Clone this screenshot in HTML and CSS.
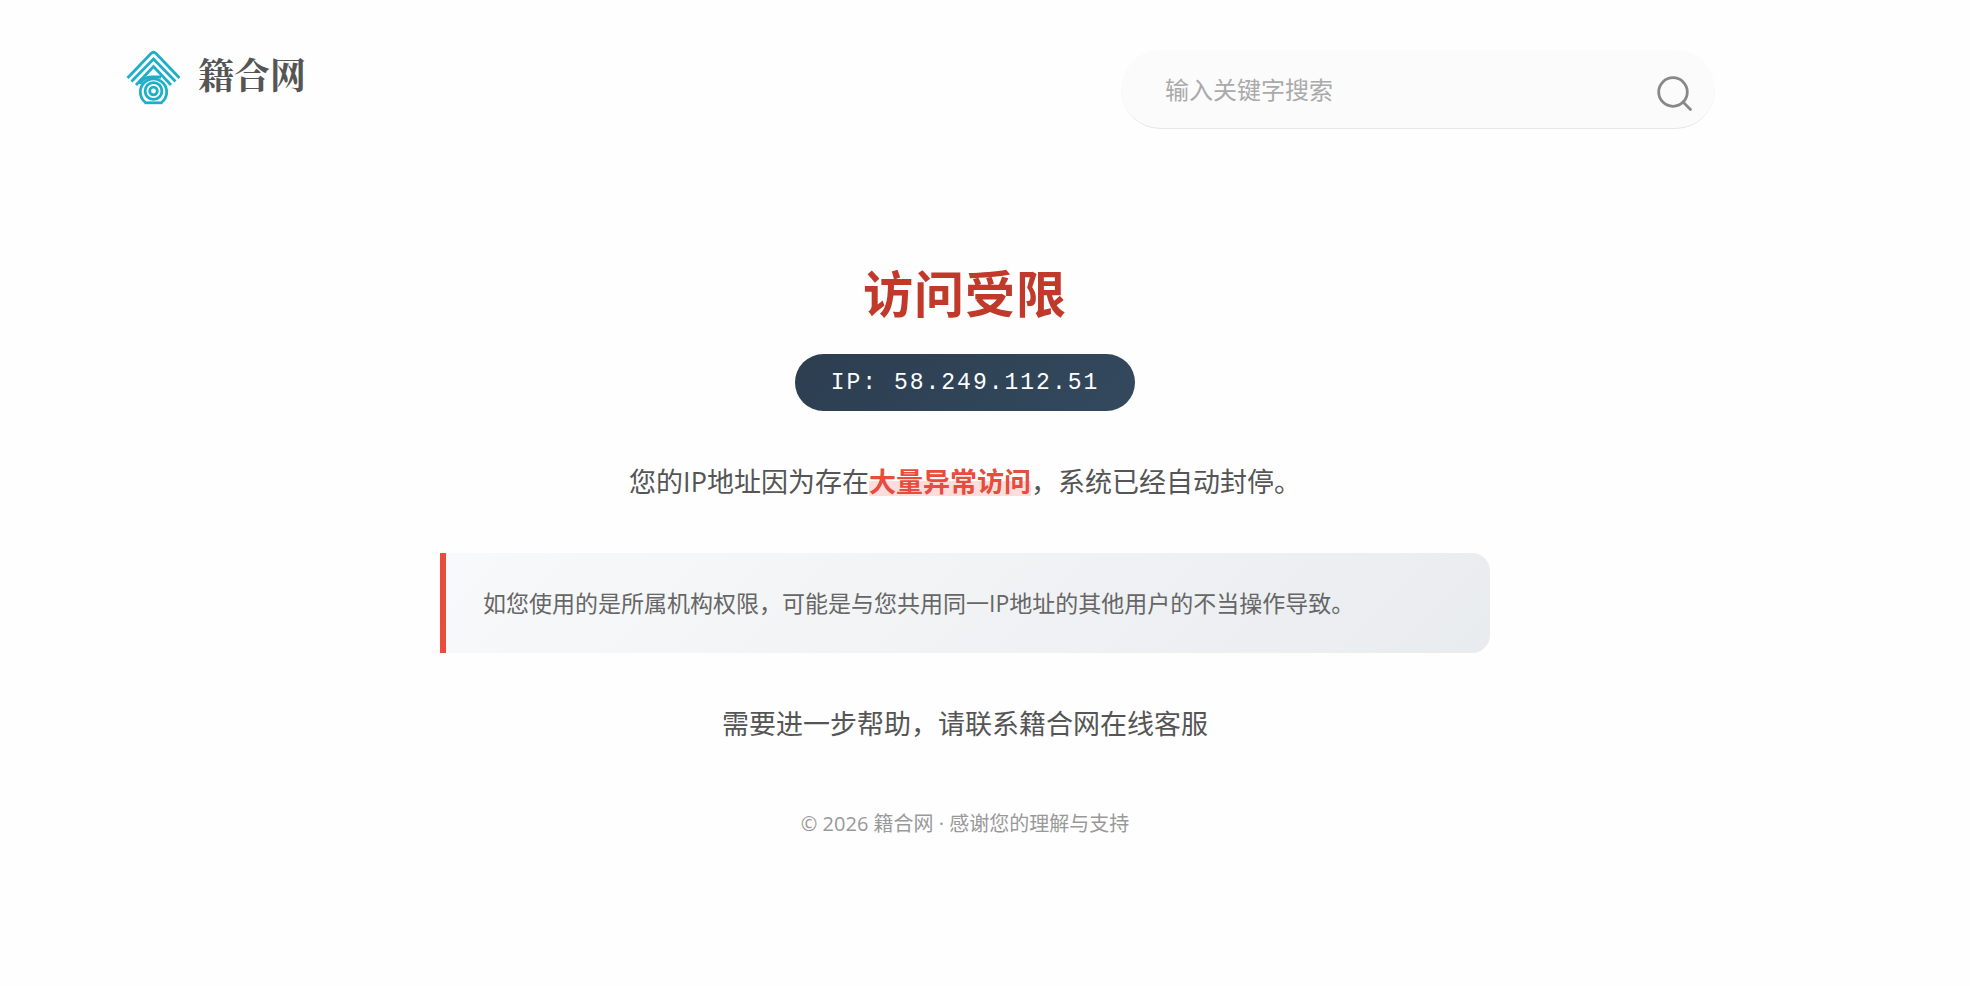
FILE: index.html
```
<!DOCTYPE html>
<html lang="zh-CN">
<head>
    <meta charset="UTF-8">
    <meta name="viewport" content="width=device-width, initial-scale=1.0">
    <title>访问受限 - 籍合网</title>
    <link rel="stylesheet" href="styles.css">
</head>
<body>
    <header class="header">
        <a class="logo" href="#">
            <svg class="logo-icon" viewBox="0 0 56 56" fill="none" stroke="#1eafc8" stroke-width="2.8" aria-hidden="true">
                <path d="M2.5 28 26 3.5Q28.5 1 31 3.5L54.5 28"/>
                <path d="M6.5 31.5 28.5 9 50.5 31.5"/>
                <path d="M11 35 28.5 16.5 46 35"/>
                <path d="M15 34Q18 27 27 27H36"/>
                <path d="M20.5 52.5A13.2 13.2 0 1 1 36.5 52.5"/>
                <path d="M19.5 52.8H37.5"/>
                <circle cx="28.5" cy="41" r="8.4"/>
                <circle cx="28.5" cy="41" r="3.8"/>
            </svg>
            <span class="logo-text">籍合网</span>
        </a>
        <form class="search" id="searchForm">
            <input type="text" class="search-input" placeholder="输入关键字搜索" aria-label="输入关键字搜索">
            <button type="submit" class="search-button" aria-label="搜索">
                <svg class="search-icon" viewBox="0 0 36 36" fill="none" stroke="#888" stroke-width="2.8" stroke-linecap="round" aria-hidden="true">
                    <circle cx="16" cy="16" r="14.3"/>
                    <path d="M26 26 33.5 33.5"/>
                </svg>
            </button>
        </form>
    </header>

    <main class="container">
        <h1>访问受限</h1>
        <div class="ip-address">IP: 58.249.112.51</div>
        <p class="message">您的IP地址因为存在<strong class="highlight">大量异常访问</strong>，系统已经自动封停。</p>
        <div class="notice">如您使用的是所属机构权限，可能是与您共用同一IP地址的其他用户的不当操作导致。</div>
        <p class="message">需要进一步帮助，请联系籍合网在线客服</p>
        <footer class="footer">© 2026 籍合网 · 感谢您的理解与支持</footer>
    </main>
</body>
</html>
```
FILE: styles.css
```
* {
    box-sizing: border-box;
}
body {
    font-family: "Open Sans", "Noto Sans CJK SC", sans-serif;
    background-color: #fefefe;
    color: #555;
    margin: 0;
    padding: 50px 40px 50px 0;
}
.header {
    display: flex;
    justify-content: space-between;
    align-items: flex-start;
    padding: 0 215px 0 125px;
}
.logo {
    display: flex;
    align-items: flex-start;
    gap: 17px;
    color: #555;
    text-decoration: none;
}
.logo-icon {
    width: 56px;
    height: 56px;
}
.logo-text {
    font-family: "Noto Serif CJK SC", "Noto Sans CJK SC", serif;
    font-size: 36px;
    font-weight: bold;
    line-height: 48px;
}
.search {
    display: flex;
    align-items: center;
    width: 594px;
    height: 79px;
    padding: 0 22px 0 44px;
    background: #fbfbfb;
    border-bottom: 1px solid #e6e6e6;
    border-radius: 40px;
}
.search-input {
    flex: 1;
    min-width: 0;
    padding: 0;
    border: none;
    outline: none;
    background: transparent;
    font-family: inherit;
    font-size: 24px;
    color: #555;
}
.search-input::placeholder {
    color: #aaa;
}
.search-button {
    padding: 10px 0 0;
    border: none;
    background: none;
    cursor: pointer;
}
.search-icon {
    display: block;
    width: 36px;
    height: 36px;
}
.container {
    max-width: 1050px;
    margin: 130px auto 0;
    text-align: center;
}
h1 {
    margin: 0 0 25px;
    font-size: 50px;
    line-height: 70px;
    letter-spacing: 1px;
    color: #c0392b;
}
.ip-address {
    display: inline-block;
    padding: 1px 36px 0;
    border-radius: 30px;
    background: linear-gradient(135deg, #2c3e50, #34495e);
    color: #fff;
    font-family: "Courier New", "Liberation Mono", monospace;
    font-size: 23px;
    line-height: 56px;
    letter-spacing: 2px;
}
.message {
    margin: 46px 0;
    font-size: 27px;
    line-height: 50px;
}
.highlight {
    color: #e74c3c;
    background: linear-gradient(transparent 50%, #fdd 50%, #fdd 88%, transparent 88%);
}
.notice {
    padding: 30px 37px;
    border-left: 6px solid #e74c3c;
    border-radius: 0 18px 18px 0;
    background: linear-gradient(135deg, #f8f9fa, #e9ecef);
    color: #666;
    font-size: 23px;
    line-height: 40px;
    text-align: left;
}
.footer {
    color: #999;
    font-size: 20px;
    line-height: 30px;
    padding-top: 14px;
}
```
